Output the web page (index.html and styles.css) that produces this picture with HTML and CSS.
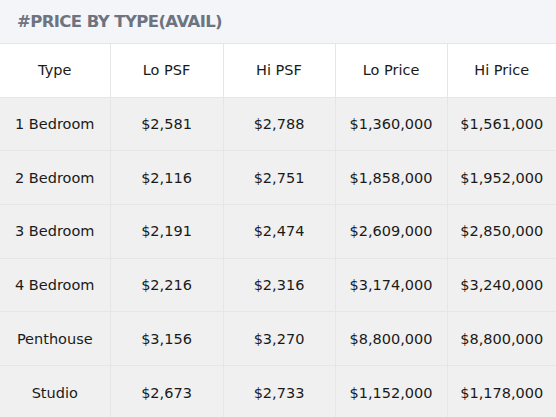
FILE: index.html
```html
<!DOCTYPE html>
<html>
<head>
<meta charset="utf-8">
<link rel="stylesheet" href="styles.css">
</head>
<body>
<div class="panel">
  <div class="panel-head">#PRICE BY TYPE(AVAIL)</div>
  <table class="price-table">
    <colgroup>
      <col class="c1"><col class="c2"><col class="c3"><col class="c4"><col class="c5">
    </colgroup>
    <thead>
      <tr><th>Type</th><th>Lo PSF</th><th>Hi PSF</th><th>Lo Price</th><th>Hi Price</th></tr>
    </thead>
    <tbody>
      <tr><td>1 Bedroom</td><td>$2,581</td><td>$2,788</td><td>$1,360,000</td><td>$1,561,000</td></tr>
      <tr><td>2 Bedroom</td><td>$2,116</td><td>$2,751</td><td>$1,858,000</td><td>$1,952,000</td></tr>
      <tr><td>3 Bedroom</td><td>$2,191</td><td>$2,474</td><td>$2,609,000</td><td>$2,850,000</td></tr>
      <tr><td>4 Bedroom</td><td>$2,216</td><td>$2,316</td><td>$3,174,000</td><td>$3,240,000</td></tr>
      <tr><td>Penthouse</td><td>$3,156</td><td>$3,270</td><td>$8,800,000</td><td>$8,800,000</td></tr>
      <tr><td>Studio</td><td>$2,673</td><td>$2,733</td><td>$1,152,000</td><td>$1,178,000</td></tr>
    </tbody>
  </table>
</div>
</body>
</html>
```
FILE: styles.css
```css
html, body {
  margin: 0;
  padding: 0;
  background: #ffffff;
}
body {
  font-family: "DejaVu Sans", sans-serif;
  color: #1a1a1a;
}
.panel {
  width: 556px;
  height: 417px;
  overflow: hidden;
}
.panel-head {
  height: 44px;
  box-sizing: border-box;
  padding: 0 0 1px 17px;
  display: flex;
  align-items: center;
  background: #f4f5f9;
  border-bottom: 1px solid #e4e5ea;
  color: #6d7480;
  font-weight: bold;
  font-size: 16.5px;
  letter-spacing: -0.6px;
}
.price-table {
  width: 556px;
  table-layout: fixed;
  border-collapse: collapse;
  font-size: 14.5px;
}
.c1 { width: 110px; }
.c2 { width: 113px; }
.c3 { width: 112px; }
.c4 { width: 112px; }
.c5 { width: 109px; }
.price-table th,
.price-table td {
  text-align: center;
  padding: 0;
  border-right: 1px solid #e6e6e6;
  border-bottom: 1px solid #e6e6e6;
  font-weight: normal;
  white-space: nowrap;
}
.price-table th:last-child,
.price-table td:last-child {
  border-right: none;
}
.price-table thead tr {
  height: 53px;
  background: #ffffff;
}
.price-table tbody tr {
  height: 53.7px;
  background: #f0f0f0;
}
.price-table tbody tr:last-child td {
  border-bottom: none;
}
```
